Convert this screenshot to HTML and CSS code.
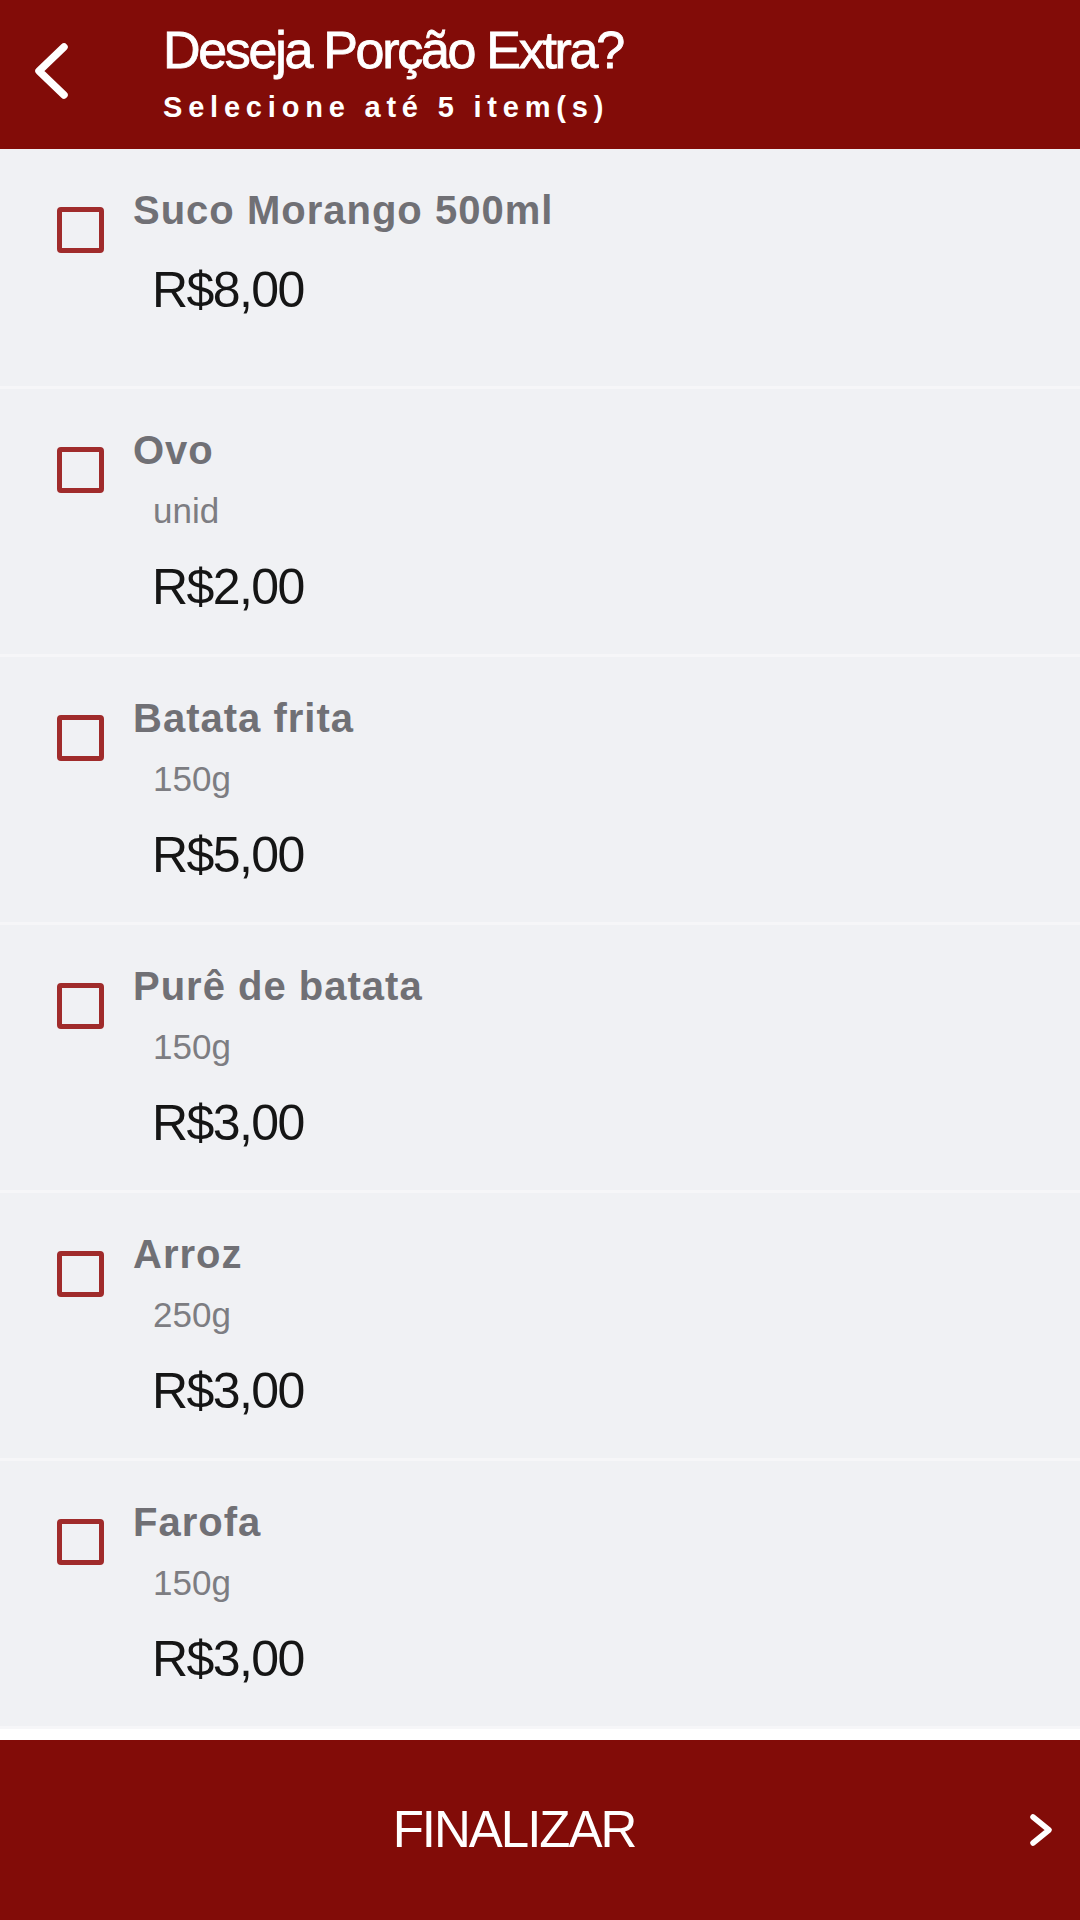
FILE: index.html
```html
<!DOCTYPE html>
<html lang="pt-BR">
<head>
<meta charset="utf-8">
<title>Deseja Porção Extra?</title>
<link rel="stylesheet" href="styles.css">
</head>
<body>
<div class="screen">
  <header class="topbar">
    <svg class="back" viewBox="0 0 36 58" aria-hidden="true">
      <polyline points="31,5 6,29 31,53" fill="none" stroke="#fff" stroke-width="7.5" stroke-linecap="round" stroke-linejoin="round"/>
    </svg>
    <div class="titles">
      <div class="title">Deseja Porção Extra?</div>
      <div class="subtitle">Selecione até 5 item(s)</div>
    </div>
  </header>

  <main class="list">
    <div class="item item-first">
      <span class="check"></span>
      <div class="info">
        <div class="name">Suco Morango 500ml</div>
        <div class="price price-nosub">R$8,00</div>
      </div>
    </div>
    <div class="item">
      <span class="check"></span>
      <div class="info">
        <div class="name">Ovo</div>
        <div class="sub">unid</div>
        <div class="price">R$2,00</div>
      </div>
    </div>
    <div class="item">
      <span class="check"></span>
      <div class="info">
        <div class="name">Batata frita</div>
        <div class="sub">150g</div>
        <div class="price">R$5,00</div>
      </div>
    </div>
    <div class="item">
      <span class="check"></span>
      <div class="info">
        <div class="name">Purê de batata</div>
        <div class="sub">150g</div>
        <div class="price">R$3,00</div>
      </div>
    </div>
    <div class="item">
      <span class="check"></span>
      <div class="info">
        <div class="name">Arroz</div>
        <div class="sub">250g</div>
        <div class="price">R$3,00</div>
      </div>
    </div>
    <div class="item">
      <span class="check"></span>
      <div class="info">
        <div class="name">Farofa</div>
        <div class="sub">150g</div>
        <div class="price">R$3,00</div>
      </div>
    </div>
  </main>

  <div class="spacer"></div>

  <footer class="finish">
    <span class="finish-label">FINALIZAR</span>
    <svg class="finish-arrow" viewBox="0 0 26 36" aria-hidden="true">
      <polyline points="5,5 21,18 5,31" fill="none" stroke="#fff" stroke-width="5.5" stroke-linecap="round" stroke-linejoin="round"/>
    </svg>
  </footer>
</div>
</body>
</html>
```

FILE: styles.css
```css
* { box-sizing: border-box; }

html, body {
  margin: 0;
  padding: 0;
  background: #ffffff;
}

body {
  font-family: "Liberation Sans", Arial, sans-serif;
}

.screen {
  width: 1080px;
  height: 1920px;
  display: flex;
  flex-direction: column;
  overflow: hidden;
}

/* Header */
.topbar {
  height: 149px;
  flex-shrink: 0;
  background: #820c08;
  display: flex;
  align-items: flex-start;
  padding: 22px 0 0 33px;
  color: #ffffff;
}

.back {
  width: 36px;
  height: 58px;
  margin-top: 20px;
  flex-shrink: 0;
}

.titles {
  margin-left: 94px;
  display: flex;
  flex-direction: column;
}

.title {
  font-size: 52px;
  line-height: 56px;
  letter-spacing: -2.3px;
  -webkit-text-stroke: 0.8px #ffffff;
  white-space: nowrap;
}

.subtitle {
  margin-top: 12px;
  font-size: 29px;
  line-height: 34px;
  font-weight: bold;
  letter-spacing: 5.8px;
  white-space: nowrap;
}

/* List */
.list {
  display: flex;
  flex-direction: column;
  flex-shrink: 0;
}

.item {
  display: flex;
  align-items: flex-start;
  padding: 37px 0 39px 57px;
  background: #f0f1f4;
  border-bottom: 3px solid #f6f6f8;
  min-height: 240px;
}

.check {
  width: 47px;
  height: 46px;
  border: 5px solid #a02b2b;
  border-radius: 4px;
  margin-top: 21px;
  flex-shrink: 0;
}

.info {
  margin-left: 29px;
  display: flex;
  flex-direction: column;
}

.name {
  font-size: 40px;
  line-height: 48px;
  font-weight: bold;
  letter-spacing: 1px;
  color: #707075;
  white-space: nowrap;
}

.sub {
  margin-top: 15px;
  padding-left: 20px;
  font-size: 35px;
  line-height: 44px;
  color: #7d7d82;
}

.price {
  margin-top: 26px;
  padding-left: 19px;
  font-size: 50px;
  line-height: 56px;
  letter-spacing: -1.6px;
  color: #151515;
}

.price-nosub {
  margin-top: 28px;
}

.spacer {
  flex: 1;
  background: #ffffff;
}

/* Footer */
.finish {
  height: 180px;
  flex-shrink: 0;
  background: #820c08;
  display: flex;
  align-items: center;
  color: #ffffff;
}

.finish-label {
  flex: 1;
  text-align: center;
  font-size: 51px;
  line-height: 56px;
  letter-spacing: -2px;
}

.finish-arrow {
  width: 26px;
  height: 36px;
  margin-right: 26px;
  flex-shrink: 0;
}
```
